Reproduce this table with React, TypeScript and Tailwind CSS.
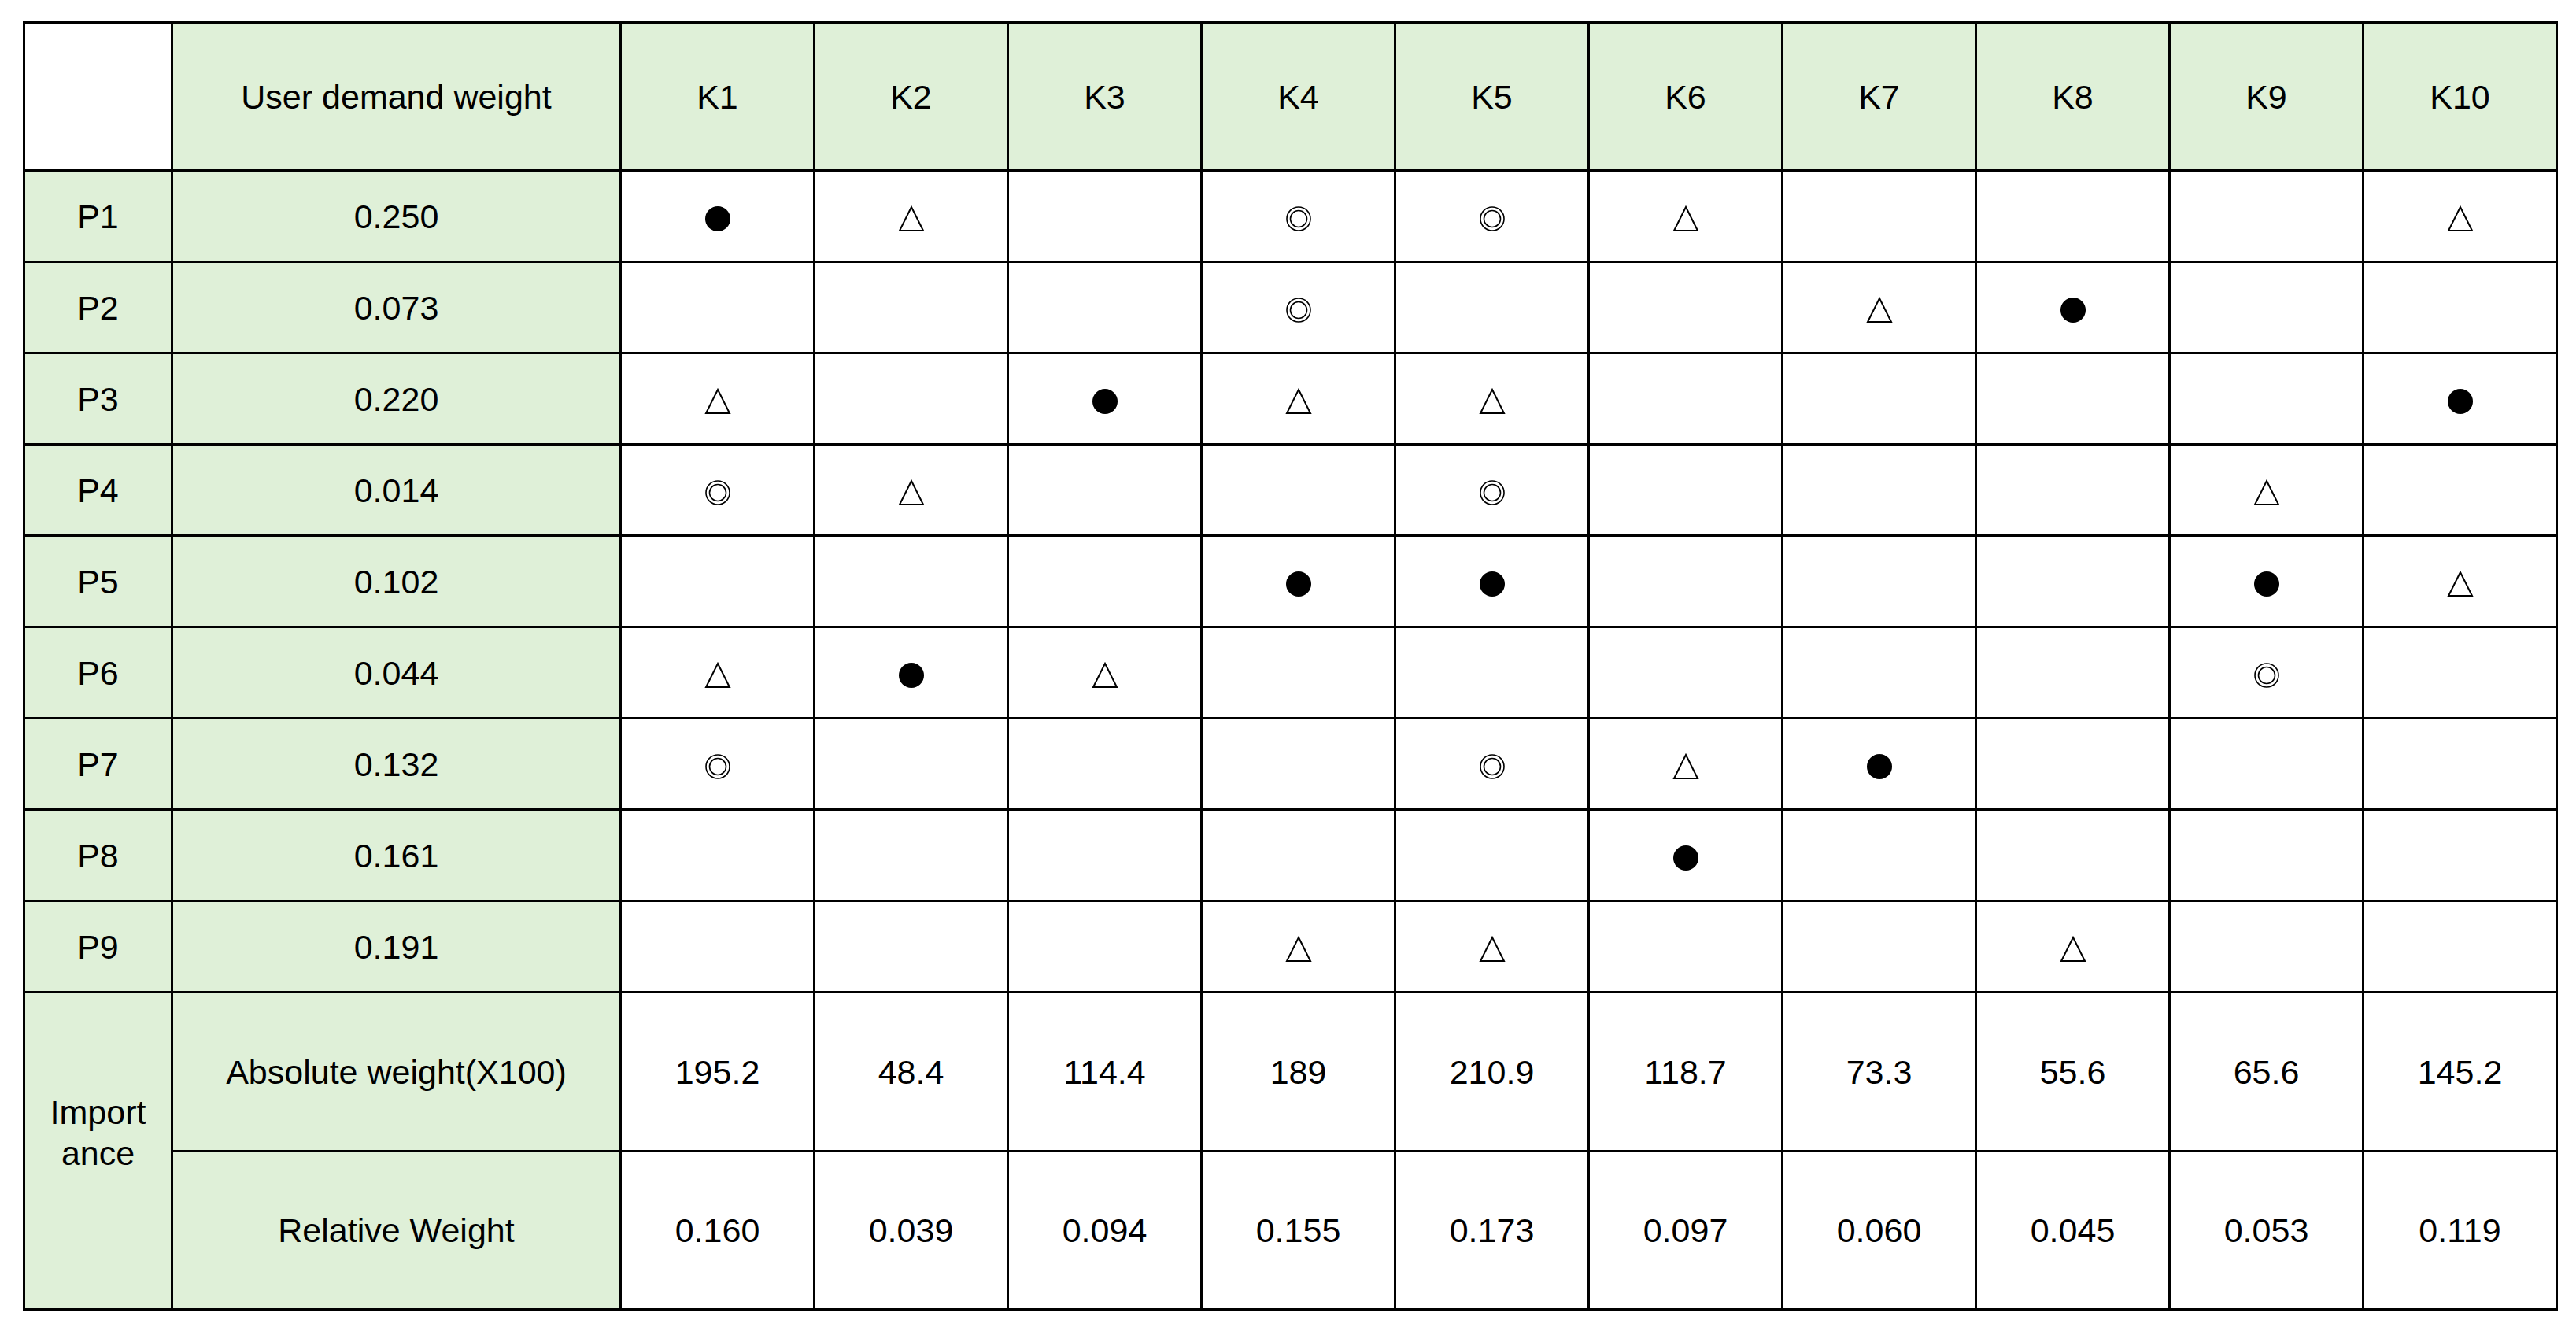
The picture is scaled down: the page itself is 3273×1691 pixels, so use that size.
import React from 'react';

type Mark = 'dot' | 'tri' | 'ring' | null;

const rows: { id: string; weight: string; marks: Mark[] }[] = [
  { id: 'P1', weight: '0.250', marks: ['dot', 'tri', null, 'ring', 'ring', 'tri', null, null, null, 'tri'] },
  { id: 'P2', weight: '0.073', marks: [null, null, null, 'ring', null, null, 'tri', 'dot', null, null] },
  { id: 'P3', weight: '0.220', marks: ['tri', null, 'dot', 'tri', 'tri', null, null, null, null, 'dot'] },
  { id: 'P4', weight: '0.014', marks: ['ring', 'tri', null, null, 'ring', null, null, null, 'tri', null] },
  { id: 'P5', weight: '0.102', marks: [null, null, null, 'dot', 'dot', null, null, null, 'dot', 'tri'] },
  { id: 'P6', weight: '0.044', marks: ['tri', 'dot', 'tri', null, null, null, null, null, 'ring', null] },
  { id: 'P7', weight: '0.132', marks: ['ring', null, null, null, 'ring', 'tri', 'dot', null, null, null] },
  { id: 'P8', weight: '0.161', marks: [null, null, null, null, null, 'dot', null, null, null, null] },
  { id: 'P9', weight: '0.191', marks: [null, null, null, 'tri', 'tri', null, null, 'tri', null, null] },
];

const absolute = ['195.2', '48.4', '114.4', '189', '210.9', '118.7', '73.3', '55.6', '65.6', '145.2'];
const relative = ['0.160', '0.039', '0.094', '0.155', '0.173', '0.097', '0.060', '0.045', '0.053', '0.119'];
const cols = ['K1', 'K2', 'K3', 'K4', 'K5', 'K6', 'K7', 'K8', 'K9', 'K10'];

function Symbol({ mark }: { mark: Mark }) {
  if (!mark) return null;
  return (
    <svg width="34" height="34" viewBox="0 0 34 34" className="inline-block align-middle">
      {mark === 'dot' && <circle cx="17" cy="17" r="16" fill="#000" />}
      {mark === 'ring' && (
        <g fill="none" stroke="#000" strokeWidth="1.6">
          <circle cx="17" cy="17" r="15" />
          <circle cx="17" cy="17" r="10.5" />
        </g>
      )}
      {mark === 'tri' && (
        <polygon points="17,2 32,32 2,32" fill="none" stroke="#000" strokeWidth="2" strokeLinejoin="miter" />
      )}
    </svg>
  );
}

const cell = 'border-[3px] border-black text-center align-middle p-0';
const green = 'bg-[#dff0d8]';

export default function App() {
  return (
    <div
      className="w-[3273px] h-[1691px] bg-white pl-[29px] pt-[27px] text-black text-[43px] leading-[52px]"
      style={{ fontFamily: '"Liberation Sans", Arial, sans-serif' }}
    >
      <table className="table-fixed border-collapse w-[3221px]">
        <colgroup>
          <col className="w-[188px]" />
          <col className="w-[570px]" />
          {cols.map((c) => (
            <col key={c} />
          ))}
        </colgroup>
        <tbody>
          {/* Header */}
          <tr className="h-[188px]">
            <td className={`${cell} bg-white`} />
            <td className={`${cell} ${green}`}>User demand weight</td>
            {cols.map((c) => (
              <td key={c} className={`${cell} ${green}`}>
                {c}
              </td>
            ))}
          </tr>

          {/* Requirement rows */}
          {rows.map((r) => (
            <tr key={r.id} className="h-[116px]">
              <td className={`${cell} ${green}`}>{r.id}</td>
              <td className={`${cell} ${green}`}>{r.weight}</td>
              {r.marks.map((m, i) => (
                <td key={i} className={`${cell} bg-white`}>
                  <Symbol mark={m} />
                </td>
              ))}
            </tr>
          ))}

          {/* Importance */}
          <tr className="h-[202px]">
            <td rowSpan={2} className={`${cell} ${green} pb-[46px]`}>
              Import
              <br />
              ance
            </td>
            <td className={`${cell} ${green}`}>Absolute weight(X100)</td>
            {absolute.map((v, i) => (
              <td key={i} className={`${cell} bg-white`}>
                {v}
              </td>
            ))}
          </tr>
          <tr className="h-[201px]">
            <td className={`${cell} ${green}`}>Relative Weight</td>
            {relative.map((v, i) => (
              <td key={i} className={`${cell} bg-white`}>
                {v}
              </td>
            ))}
          </tr>
        </tbody>
      </table>
    </div>
  );
}
